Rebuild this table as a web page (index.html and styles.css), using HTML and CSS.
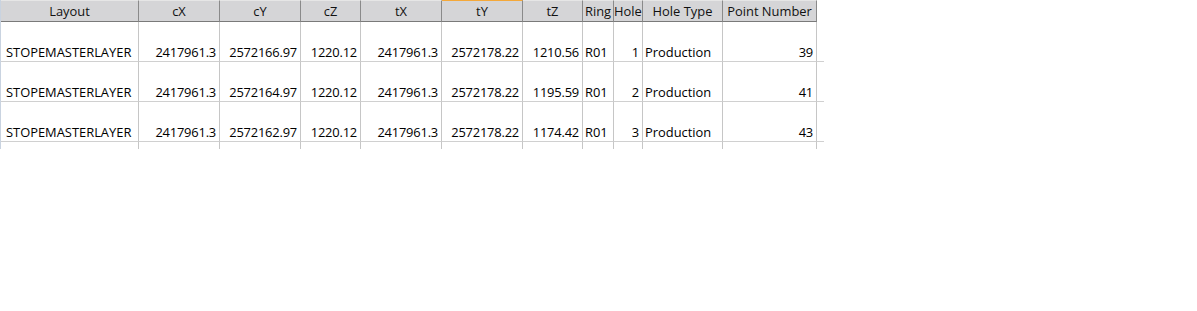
FILE: index.html
```html
<!DOCTYPE html>
<html>
<head>
<meta charset="utf-8">
<link rel="stylesheet" href="styles.css">
</head>
<body>
<div class="sheet">
  <div class="hd">Layout</div>
  <div class="hd">cX</div>
  <div class="hd">cY</div>
  <div class="hd">cZ</div>
  <div class="hd">tX</div>
  <div class="hd sel">tY</div>
  <div class="hd">tZ</div>
  <div class="hd">Ring</div>
  <div class="hd">Hole</div>
  <div class="hd">Hole Type</div>
  <div class="hd">Point Number</div>
  <div class="hd-gap"></div>

  <div class="c l first">STOPEMASTERLAYER</div>
  <div class="c r">2417961.3</div>
  <div class="c r">2572166.97</div>
  <div class="c r">1220.12</div>
  <div class="c r">2417961.3</div>
  <div class="c r">2572178.22</div>
  <div class="c r">1210.56</div>
  <div class="c l">R01</div>
  <div class="c r">1</div>
  <div class="c l">Production</div>
  <div class="c r">39</div>
  <div class="c gap"></div>

  <div class="c l first">STOPEMASTERLAYER</div>
  <div class="c r">2417961.3</div>
  <div class="c r">2572164.97</div>
  <div class="c r">1220.12</div>
  <div class="c r">2417961.3</div>
  <div class="c r">2572178.22</div>
  <div class="c r">1195.59</div>
  <div class="c l">R01</div>
  <div class="c r">2</div>
  <div class="c l">Production</div>
  <div class="c r">41</div>
  <div class="c gap"></div>

  <div class="c l first">STOPEMASTERLAYER</div>
  <div class="c r">2417961.3</div>
  <div class="c r">2572162.97</div>
  <div class="c r">1220.12</div>
  <div class="c r">2417961.3</div>
  <div class="c r">2572178.22</div>
  <div class="c r">1174.42</div>
  <div class="c l">R01</div>
  <div class="c r">3</div>
  <div class="c l">Production</div>
  <div class="c r">43</div>
  <div class="c gap"></div>

  <div class="p"></div>
  <div class="p"></div>
  <div class="p"></div>
  <div class="p"></div>
  <div class="p"></div>
  <div class="p"></div>
  <div class="p"></div>
  <div class="p"></div>
  <div class="p"></div>
  <div class="p"></div>
  <div class="p"></div>
  <div class="p-gap"></div>
</div>
</body>
</html>
```

FILE: styles.css
```css
html, body {
  margin: 0;
  padding: 0;
  background: #ffffff;
}

body {
  font-family: "Open Sans", "Liberation Sans", sans-serif;
  font-size: 12.9px;
  font-weight: 500;
  color: #000000;
}

.sheet {
  display: grid;
  grid-template-columns: 138px 81px 81px 60px 81px 81px 60px 31px 29px 80px 94px 7px;
  grid-template-rows: 22px 40px 40px 40px 7px;
  width: max-content;
  border-left: 1px solid #c9d3e0;
}

.hd {
  box-sizing: border-box;
  background: #d5d5d7;
  border-top: 1px solid #e6e6e6;
  border-right: 1px solid #8a8a8a;
  border-bottom: 1px solid #7a7a7a;
  color: #111111;
  line-height: 16px;
  padding-top: 2px;
  text-align: center;
  white-space: nowrap;
  overflow: visible;
}

.hd.sel {
  border-top: 1px solid #f4a83a;
}

.hd-gap {
  background: #ffffff;
}

.c {
  box-sizing: border-box;
  border-right: 1px solid #c6c6c6;
  border-bottom: 1px solid #d0d0d0;
  display: flex;
  align-items: flex-end;
  line-height: 16px;
  padding: 0 2px 1px 2px;
  white-space: nowrap;
}

.c.r {
  justify-content: flex-end;
  padding-right: 3px;
  letter-spacing: -0.2px;
}

.c.l {
  justify-content: flex-start;
}

.c.first {
  padding-left: 5px;
}

.c.gap {
  border-right: none;
}

.p {
  box-sizing: border-box;
  border-right: 1px solid #c6c6c6;
}

.p-gap {
  background: #ffffff;
}
```
